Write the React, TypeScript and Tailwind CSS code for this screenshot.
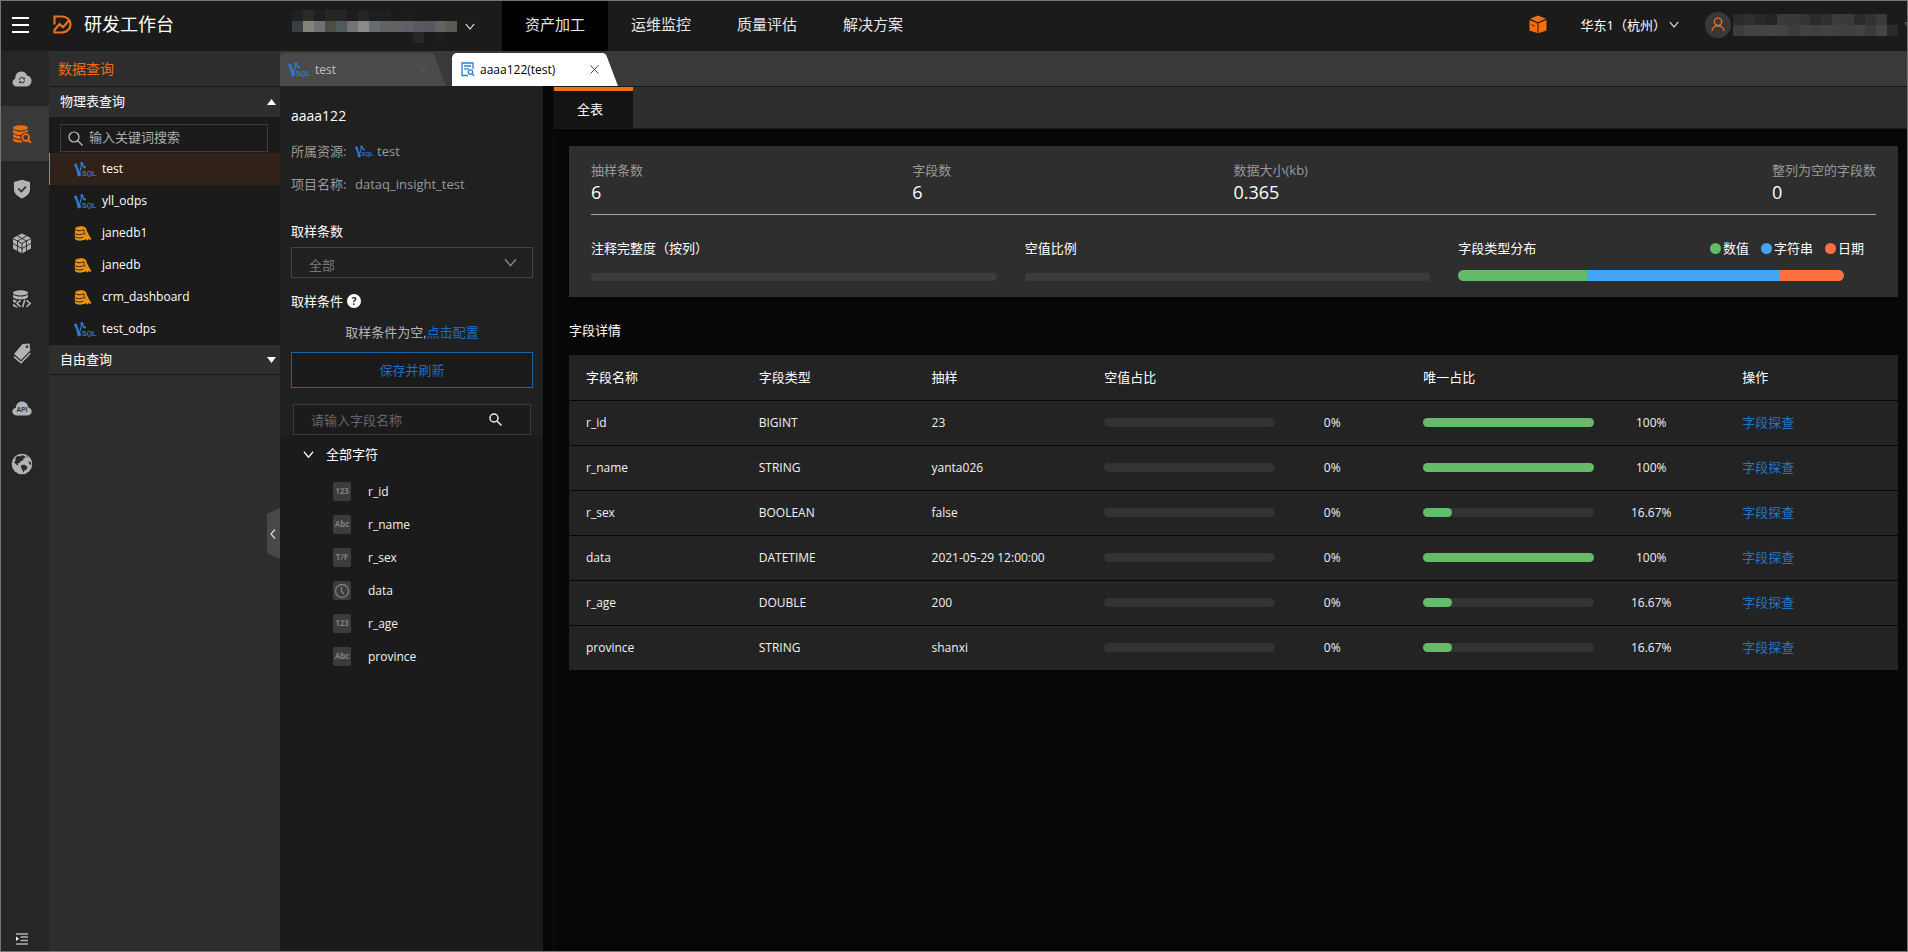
import type { ReactNode } from "react";

const mosaicProject = [
  ["#202121", "#2b2a29", "#1e1e1e", "#262626", "#252525", "#1d1d1d", "#242424", "#1e1e1e", "#1f1f1f", "#1c1c1c", "#1d1d1d", "#1b1b1b", "#1b1b1b", "#1b1b1b", "#1b1b1b"],
  ["#393f45", "#86827c", "#6f7173", "#4c4d45", "#50595b", "#757177", "#8b8a86", "#646d70", "#646068", "#5f6462", "#605e66", "#58585e", "#55595f", "#65625e", "#595a52"],
  ["#1b1b1b", "#1b1b1b", "#1b1b1b", "#1b1b1b", "#1b1b1b", "#1b1b1b", "#1b1b1b", "#1b1b1b", "#1b1b1b", "#1b1b1b", "#1b1b1b", "#272727", "#1b1b1b", "#1e1e1e", "#1b1b1b"],
];

const mosaicUser = [
  ["#2b2b2b", "#303030", "#292929", "#242424", "#393939", "#383838", "#353434", "#292a2c", "#303030", "#3a3b3d", "#3a3a3a", "#2b2b2b", "#323232", "#3a3a3a", "#1b1b1b"],
  ["#3a3c3e", "#434340", "#434343", "#434446", "#414344", "#3f3a3d", "#42423f", "#3e4044", "#424242", "#3e4146", "#423e40", "#3f4344", "#3b3839", "#454545", "#2a2a2a"],
];

function Mosaic({ rows }: { rows: string[][] }) {
  return (
    <div aria-hidden="true">
      {rows.map((row, y) => (
        <div key={y} className="flex">
          {row.map((color, x) => (
            <span key={x} className="h-[11px] w-[11px]" style={{ backgroundColor: color }} />
          ))}
        </div>
      ))}
    </div>
  );
}

function Chevron({ className }: { className: string }) {
  return (
    <svg viewBox="0 0 12 8" fill="none" stroke="currentColor" strokeWidth="1.3" className={className} aria-hidden="true">
      <path d="M1 1l5 6 5-6" />
    </svg>
  );
}

function Close({ className }: { className: string }) {
  return (
    <svg viewBox="0 0 10 10" fill="none" stroke="currentColor" strokeWidth="1.1" className={className} aria-hidden="true">
      <path d="M.5.5l9 9M9.500.5l-9 9" />
    </svg>
  );
}

function SqlIcon({ className = "h-[15px] w-[23px]" }: { className?: string }) {
  return (
    <svg viewBox="0 0 23 15" className={className} aria-hidden="true">
      <g stroke="#3179cc" fill="none" strokeLinecap="round">
        <path d="M1.800 3l3.200 9.500" strokeWidth="2.400" />
        <path d="M5 12.500L8 2M8 2l2.500 3" strokeWidth="1.300" />
      </g>
      <circle cx="1.800" cy="3" r="1.600" fill="#3179cc" />
      <circle cx="7.800" cy="1.600" r="1.500" fill="#3179cc" />
      <circle cx="5.200" cy="12.500" r="1.900" fill="#3179cc" />
      <circle cx="10.500" cy="5.200" r="1.300" fill="#3179cc" />
      <text x="8" y="13.500" fontSize="7" fontWeight="700" fill="#3179cc" fontFamily="Liberation Sans, sans-serif">
        SQL
      </text>
    </svg>
  );
}

function DbIcon() {
  return (
    <svg viewBox="0 0 18 15" className="h-[15px] w-[18px]" aria-hidden="true">
      <path d="M1 2.500C2.500.300 8.500-.4 11 1.300c1.300.9 1.500 2.700 2.200 4.400l4 7.300-.6 1.200-2-1.200-.8 1.500-2.200-1.300C8 15.300 2.500 15 1 13V9.500l-.4-1.700L1 6z" fill="#ee930f" />
      <path d="M1 3.600c2 1.500 6 1.500 8.500.2M1 7.500c2.200 1.500 6 1.400 8.500.1M1.500 11c2 1.300 5.500 1.200 7.800 0M10 3.500c-.2 2 .3 4 1.200 5.300" fill="none" stroke="#1b1b1b" strokeWidth=".9" />
    </svg>
  );
}

const railIcons: { label: string; active?: boolean; icon: ReactNode }[] = [
  {
    label: "数据同步",
    icon: (
      <svg viewBox="0 0 20 16" className="h-4 w-5">
        <path d="M5 15.500C2.200 15.500.500 13.700.500 11.500c0-1.800 1.200-3.300 2.800-3.700C3 3.300 5.700.5 9.300.5c2.700 0 4.900 1.500 5.700 4 2.700.2 4.500 2.500 4.500 5.300 0 3.200-2.200 5.700-5 5.700z" fill="#b3b3b3" />
        <path d="M7.300 8.800A2.800 2.800 0 0 1 12.200 7.500M12.700 9.500a2.800 2.800 0 0 1-4.900 1.300" fill="none" stroke="#282828" strokeWidth="1" />
        <path d="M12.900 6.300v2.100h-2.100zM7.100 12.300v-2.100h2.100z" fill="#282828" />
      </svg>
    ),
  },
  {
    label: "数据查询",
    active: true,
    icon: (
      <svg viewBox="0 0 20 18" className="h-[18px] w-5">
        <g fill="#f26c0d">
          <ellipse cx="8.500" cy="2.800" rx="7.500" ry="2.600" />
          <path d="M1 4.300c1 1.600 4 2.400 7.500 2.400S15 5.900 16 4.300v2.400c-.7.400-2 .6-2.900.8-1.900.3-3.500 1.300-4.200 2.600C5 10.200 1.800 9.100 1 7.400zM1 8.800c1.300 1.700 4 2.400 7.400 2.500v2.600C4.800 13.900 1.700 13 1 11.600zM1 13c1.500 1.500 4.500 2.200 8 2.100.4 1 1 1.700 1.700 2.300C6 18 1.600 17 1 15.300z" />
          <path d="M18 16l2 1.800h-2.600l-1.300-1.300z" />
        </g>
        <circle cx="13.700" cy="12.500" r="3.300" fill="none" stroke="#f26c0d" strokeWidth="1.800" />
        <path d="M16 15l2.700 2.500" stroke="#f26c0d" strokeWidth="2" />
      </svg>
    ),
  },
  {
    label: "数据安全",
    icon: (
      <svg viewBox="0 0 18 20" className="h-5 w-[18px]">
        <path d="M9 .8L17 3v7.500c0 4-3.500 7-8 9-4.500-2-8-5-8-9V3z" fill="#b3b3b3" />
        <path d="M5.300 9.500l3 3 4.800-5" fill="none" stroke="#262626" strokeWidth="1.600" />
      </svg>
    ),
  },
  {
    label: "数据模型",
    icon: (
      <svg viewBox="0 0 20 21" className="h-[21px] w-5">
        <path d="M10 .5l9 4.500v10.500l-9 5-9-5V5z" fill="#b3b3b3" />
        <path d="M1 5.500l9 5 9-5M10 10.500v10M5.500 3l9 5v10.500M14.500 3l-9 5v10.500M1 10.500l9 5 9-5" fill="none" stroke="#262626" strokeWidth=".9" />
      </svg>
    ),
  },
  {
    label: "数据开发",
    icon: (
      <svg viewBox="0 0 20 18" className="h-[18px] w-5">
        <g fill="#b3b3b3">
          <ellipse cx="8.500" cy="2.900" rx="7.500" ry="2.700" />
          <path d="M1 4.600c1.500 1.600 4.500 2 7.500 2s6-.4 7.500-2v2.600c-1.500 1.500-4.500 2.200-7.500 2.200S2.500 8.700 1 7.200zM1 9c1 .9 2.400 1.400 4 1.700L3.300 13 1 11.500zM1 13.500l4.500 3.200v1C3.500 17.400 1.800 16.800 1 15.800z" />
        </g>
        <path d="M8.500 10.300L5 13.500l3.500 3.200M14.500 10.300l3.700 3.200-3.700 3.200M12.800 9.800l-2.300 7.500" fill="none" stroke="#b3b3b3" strokeWidth="1.600" />
      </svg>
    ),
  },
  {
    label: "标签管理",
    icon: (
      <svg viewBox="0 0 18 21" className="h-[21px] w-[18px]">
        <path d="M9.500 1l7-.5.8 7L8 17 1 11z" fill="#b3b3b3" />
        <path d="M1 13.700l7 6 9.300-9.500" fill="none" stroke="#b3b3b3" strokeWidth="1.600" />
        <circle cx="14" cy="3.800" r="1.200" fill="#262626" />
      </svg>
    ),
  },
  {
    label: "接口服务",
    icon: (
      <svg viewBox="0 0 20 15" className="h-[15px] w-5">
        <path d="M4.500 14.500C2 14.500.3 12.800.3 10.600c0-2 1.500-3.600 3.500-3.900C4 3 6.600.4 10 .4s6 2.500 6.200 6.200c2 .3 3.500 1.900 3.500 4 0 2.200-1.700 3.900-4.200 3.900z" fill="#b3b3b3" />
        <text x="10" y="11" textAnchor="middle" fontSize="6.500" fontWeight="700" fill="#333" fontFamily="Liberation Sans, sans-serif">
          API
        </text>
      </svg>
    ),
  },
  {
    label: "全域数据",
    icon: (
      <svg viewBox="0 0 22 22" className="h-[22px] w-[22px]">
        <circle cx="11" cy="11" r="10.300" fill="#b3b3b3" />
        <path d="M4.500 4.500L7 2.800l2.500.7 1-1.300 3 .6 1 1.700-2 1-.5 2-2 .5-1.500 2-2 .5 1 2-2-.8L3 9.300l1.500-1.600zM15 2.500l2 1.300-1 .7zM10.500 12l3-.3 3 2-.5 2.300-2.500 1.500-1 2.300-1.200-3-1.500-2.500zM17.500 8l2.500 1.500.3 2.500-2-.7z" fill="#2b2b2b" />
      </svg>
    ),
  },
];

const sources = [
  { name: "test", kind: "sql" },
  { name: "yll_odps", kind: "sql" },
  { name: "janedb1", kind: "db" },
  { name: "janedb", kind: "db" },
  { name: "crm_dashboard", kind: "db" },
  { name: "test_odps", kind: "sql" },
];

const rows = [
  { name: "r_id", tag: "123", type: "BIGINT", sample: "23", empty: 0, unique: 100 },
  { name: "r_name", tag: "Abc", type: "STRING", sample: "yanta026", empty: 0, unique: 100 },
  { name: "r_sex", tag: "T/F", type: "BOOLEAN", sample: "false", empty: 0, unique: 16.67 },
  { name: "data", tag: "time", type: "DATETIME", sample: "2021-05-29 12:00:00", empty: 0, unique: 100 },
  { name: "r_age", tag: "123", type: "DOUBLE", sample: "200", empty: 0, unique: 16.67 },
  { name: "province", tag: "Abc", type: "STRING", sample: "shanxi", empty: 0, unique: 16.67 },
];

const stats = [
  { label: "抽样条数", value: "6" },
  { label: "字段数", value: "6" },
  { label: "数据大小(kb)", value: "0.365" },
  { label: "整列为空的字段数", value: "0" },
];

function FieldTag({ tag }: { tag: string }) {
  return (
    <span className="flex h-[19px] w-[18px] items-center justify-center rounded-xs bg-[#3c3c3c] text-[8px] font-bold text-[#808080]">
      {tag === "time" ? (
        <svg viewBox="0 0 16 16" fill="none" stroke="currentColor" strokeWidth="1.300" className="h-4 w-4" aria-hidden="true">
          <circle cx="8" cy="8" r="6.500" />
          <path d="M7.500 4v4.500L10 11" />
        </svg>
      ) : (
        tag
      )}
    </span>
  );
}

function Ratio({ value }: { value: number }) {
  return (
    <div className="flex items-center">
      <div className="h-[9px] w-3/5 rounded-full bg-[#333333]">
        <div className="h-full rounded-full bg-[#66bb6a]" style={{ width: `${value}%` }} />
      </div>
      <span className="w-2/5 text-center">{value}%</span>
    </div>
  );
}

function TopBar() {
  return (
    <header className="flex h-[50px] items-center bg-[#1b1b1b] text-white">
      <button type="button" aria-label="菜单" className="ml-[11px] flex w-[17px] flex-col gap-[5px] pb-[3px]">
        <span className="h-0.5 bg-white" />
        <span className="h-0.5 bg-white" />
        <span className="h-0.5 bg-white" />
      </button>
      <svg viewBox="0 0 19 22" className="ml-6 h-[22px] w-[19px]" fill="none" stroke="#f0701a" aria-hidden="true">
        <path d="M1.500 9.500V1.500h7.500c5 0 8.500 3.300 8.500 7.800s-3.500 8.200-8.500 8.200H1.500V15L6.500 9l3.500 3.200L15.500 6" strokeWidth="2.200" />
      </svg>
      <h1 className="ml-3 w-[208px] pb-1 text-lg leading-6">研发工作台</h1>
      <Mosaic rows={mosaicProject} />
      <Chevron className="ml-2 h-[7px] w-[10px]" />
      <nav className="ml-[27px] flex h-full text-[15px] text-[#e6e6e6]">
        {["资产加工", "运维监控", "质量评估", "解决方案"].map((item, i) => (
          <a key={item} href="#" className={`flex items-center px-[23px] pb-[3px] ${i === 0 ? "bg-black" : ""}`}>
            {item}
          </a>
        ))}
      </nav>
      <div className="ml-auto flex items-center pb-[3px]">
        <svg viewBox="0 0 18 19" className="h-[19px] w-[18px]" aria-hidden="true">
          <path d="M9 .5l8 3.300-8 3.400-8-3.400zM.5 5L8.500 8.300v10L.5 15.500zM17.500 5l-8 3.300v10l8-2.800z" fill="#f66d0a" />
          <path d="M2.500 9.700l3.500 1.300" stroke="#4a1d00" strokeWidth="1" />
        </svg>
        <button type="button" className="ml-[34px] flex items-center gap-[3px] text-[13px] leading-5">
          华东1（杭州）
          <Chevron className="h-[7px] w-[10px]" />
        </button>
        <span className="ml-[26px] flex h-[26px] w-[26px] items-center justify-center rounded-full bg-[#393939]">
          <svg viewBox="0 0 14 15" className="h-[15px] w-3.5" fill="none" stroke="#e8701e" strokeWidth="1.400" aria-hidden="true">
            <circle cx="7" cy="4.800" r="3.700" />
            <path d="M1 14c.2-3 2.700-5.300 6-5.300s5.800 2.300 6 5.300" />
          </svg>
        </span>
        <span className="mr-[6px] ml-0.5">
          <Mosaic rows={mosaicUser} />
        </span>
        <svg viewBox="0 0 3 5" className="h-[5px] w-[3px]" aria-hidden="true">
          <path d="M0 0h3v5z" fill="#4a4a4a" />
        </svg>
      </div>
    </header>
  );
}

function Rail() {
  return (
    <nav className="flex w-12 shrink-0 flex-col bg-[#262626]">
      {railIcons.map((item) => (
        <button
          key={item.label}
          type="button"
          aria-label={item.label}
          className={`flex h-[55px] items-center justify-center pr-1.5 ${item.active ? "bg-[#393939]" : ""}`}
        >
          {item.icon}
        </button>
      ))}
      <button type="button" aria-label="展开" className="mt-auto mb-[6px] flex justify-center pr-1.5">
        <svg viewBox="0 0 12 12" className="h-3 w-3" aria-hidden="true">
          <path d="M0 1h12M4.500 4h7.500M4.500 7.500h7.500M0 11h12" stroke="#b0b0b0" strokeWidth="1.500" />
          <path d="M0 3.500l3 2.300-3 2.300z" fill="#fff" />
        </svg>
      </button>
    </nav>
  );
}

function Sidebar() {
  return (
    <aside className="relative w-[231px] shrink-0 bg-[#2e2e2e] text-[13px] text-white">
      <h2 className="flex h-9 items-center border-b border-[#161616] pl-[9px] text-sm text-[#f26c0d]">数据查询</h2>
      <button type="button" className="flex h-[30px] w-full items-center justify-between pr-1 pl-[11px]">
        物理表查询
        <svg viewBox="0 0 9 6" className="h-1.5 w-[9px]" aria-hidden="true">
          <path d="M0 6l4.500-6L9 6z" fill="#fff" />
        </svg>
      </button>
      <div className="bg-[#1b1b1b] pt-[7px]">
        <label className="mr-3 ml-[11px] flex h-7 items-center gap-[6px] border border-[#3d3d3d] pl-[7px]">
          <svg viewBox="0 0 15 15" fill="none" stroke="#c4c4c4" strokeWidth="1.200" className="h-[15px] w-[15px] shrink-0" aria-hidden="true">
            <circle cx="6" cy="6" r="5" />
            <path d="M9.700 9.700l4.800 4.800" />
          </svg>
          <input aria-label="搜索物理表" placeholder="输入关键词搜索" className="w-full min-w-0 bg-transparent outline-none placeholder:text-[#adadad]" />
        </label>
        <ul className="pt-px text-xs">
          {sources.map((s, i) => (
            <li key={s.name} className={i === 0 ? "border-l border-[#e0752f] bg-[#302119]" : "border-l border-transparent"}>
              <a href="#" className="flex h-8 items-center pl-6">
                <span className="w-7">{s.kind === "sql" ? <SqlIcon /> : <DbIcon />}</span>
                {s.name}
              </a>
            </li>
          ))}
        </ul>
      </div>
      <button type="button" className="flex h-[30px] w-full items-center justify-between border-b border-[#161616] pr-1 pl-[11px]">
        自由查询
        <svg viewBox="0 0 9 6" className="h-1.5 w-[9px]" aria-hidden="true">
          <path d="M0 0l4.500 6L9 0z" fill="#fff" />
        </svg>
      </button>
      <button
        type="button"
        aria-label="收起"
        className="absolute top-[457px] right-0 flex h-[51px] w-[13px] items-center justify-center bg-[#484848] pr-0.5 [clip-path:polygon(0_6px,100%_0,100%_100%,0_45px)]"
      >
        <svg viewBox="0 0 6 10" className="h-2.5 w-1.5" fill="none" stroke="#ddd" strokeWidth="1.200" aria-hidden="true">
          <path d="M5 .5L1 5l4 4.500" />
        </svg>
      </button>
    </aside>
  );
}

function Tab({ active, icon, title }: { active?: boolean; icon: ReactNode; title: string }) {
  return (
    <div className={`flex h-[33px] w-[166px] ${active ? "text-black" : "text-[#c2c2c2]"}`}>
      <div className={`flex grow items-center rounded-tl-[5px] ${active ? "bg-white pl-[9px]" : "bg-[#4a4a4a] pl-2"}`}>
        {icon}
        <a href="#" className={active ? "ml-[5px]" : "ml-1"}>
          {title}
        </a>
        <button type="button" aria-label="关闭" className={`ml-auto mr-[3px] ${active ? "text-[#444]" : "text-[#5c5c5c]"}`}>
          <Close className="h-[9px] w-[9px]" />
        </button>
      </div>
      <svg viewBox="0 0 16 33" className={`h-[33px] w-4 ${active ? "fill-white" : "fill-[#4a4a4a]"}`} aria-hidden="true">
        <path d="M0 0c3 0 4 1.500 5 4l11 29H0z" />
      </svg>
    </div>
  );
}

function FieldPanel() {
  return (
    <section className="flex w-[263px] shrink-0 flex-col bg-[#1b1b1b] text-[13px] leading-5 text-white">
      <div className="bg-[#202020] pt-[18px] pr-[10px] pl-[11px]">
        <h2 className="text-sm leading-6">aaaa122</h2>
        <dl className="text-[#999]">
          <div className="mt-[13px] flex h-5 items-center">
            <dt className="w-16">所属资源:</dt>
            <dd className="flex items-center gap-[3px]">
              <SqlIcon className="h-[13px] w-[19px]" />
              test
            </dd>
          </div>
          <div className="mt-[13px] flex h-5 items-center">
            <dt className="w-16">项目名称:</dt>
            <dd>dataq_insight_test</dd>
          </div>
        </dl>
        <hr className="mt-3 border-[#1c1c1c]" />
        <label htmlFor="sample-count" className="mt-[14px] block">
          取样条数
        </label>
        <div className="relative mt-[6px]">
          <select id="sample-count" className="h-[31px] w-full appearance-none border border-[#444] bg-[#202020] pt-1 pl-[17px] text-[#7d7674]">
            <option>全部</option>
          </select>
          <Chevron className="pointer-events-none absolute top-[11px] right-4 h-[9px] w-[13px] text-[#8a8a8a]" />
        </div>
        <div className="mt-[13px] flex items-center gap-1">
          取样条件
          <span className="flex h-3.5 w-3.5 items-center justify-center rounded-full bg-white text-[10px] leading-none font-bold text-[#202020]">?</span>
        </div>
        <p className="mt-[11px] text-center text-[#b5b5b5]">
          取样条件为空,
          <a href="#" className="text-[#1a6fc4]">
            点击配置
          </a>
        </p>
        <button type="button" className="mt-[10px] h-9 w-full border border-[#1a66a8] bg-[#1a1a1a] text-[#1a6fc4]">
          保存并刷新
        </button>
        <label className="mx-0.5 mt-4 flex h-[31px] items-center border border-[#3d3d3d] bg-[#1b1b1b] pr-7 pl-[17px]">
          <input aria-label="搜索字段" placeholder="请输入字段名称" className="w-full min-w-0 bg-transparent outline-none placeholder:text-[#666]" />
          <svg viewBox="0 0 13 13" fill="none" stroke="#ececec" strokeWidth="1.500" className="h-[13px] w-[13px] shrink-0" aria-hidden="true">
            <circle cx="5" cy="5" r="4" />
            <path d="M8 8l4.500 4.500" />
          </svg>
        </label>
      </div>
      <button type="button" className="mt-[9px] flex items-center gap-3 pl-[23px]">
        <Chevron className="h-[9px] w-[11px]" />
        全部字符
      </button>
      <ul className="mt-[11px] pl-[53px] text-xs text-[#f2f2f2]">
        {rows.map((r) => (
          <li key={r.name} className="flex h-[33px] items-center gap-[17px]">
            <FieldTag tag={r.tag} />
            {r.name}
          </li>
        ))}
      </ul>
    </section>
  );
}

function Summary() {
  return (
    <section className="bg-[#2e2e2e] px-[22px] pt-[14px] pb-4">
      <dl className="grid grid-cols-4 border-b border-[#a8a8a8] pb-[10px]">
        {stats.map((s) => (
          <div key={s.label} className="last:justify-self-end">
            <dt className="text-[13px] leading-5 text-[#999]">{s.label}</dt>
            <dd className="text-lg leading-6">{s.value}</dd>
          </div>
        ))}
      </dl>
      <div className="mt-[23px] mr-3 grid grid-cols-3 gap-7">
        {["注释完整度（按列）", "空值比例"].map((title) => (
          <div key={title} className="flex flex-col justify-between">
            <h3 className="leading-5">{title}</h3>
            <div className="h-2 rounded-sm bg-[#3d3d3d]" />
          </div>
        ))}
        <div>
          <div className="flex items-center leading-5">
            <h3 className="mr-auto">字段类型分布</h3>
            <ul className="flex gap-3">
              <li className="flex items-center gap-0.5">
                <span className="h-[11px] w-[11px] rounded-full bg-[#66bb6a]" />
                数值
              </li>
              <li className="flex items-center gap-0.5">
                <span className="h-[11px] w-[11px] rounded-full bg-[#42a5f5]" />
                字符串
              </li>
              <li className="flex items-center gap-0.5">
                <span className="h-[11px] w-[11px] rounded-full bg-[#ff7043]" />
                日期
              </li>
            </ul>
          </div>
          <div className="mt-3 flex h-[11px] w-[95%] overflow-hidden rounded-md">
            <span className="w-2/6 bg-[#66bb6a]" />
            <span className="w-3/6 bg-[#42a5f5]" />
            <span className="w-1/6 bg-[#ff7043]" />
          </div>
        </div>
      </div>
    </section>
  );
}

function FieldTable() {
  return (
    <table className="mt-[15px] w-full table-fixed text-left text-xs">
      <colgroup>
        <col className="w-[13%]" />
        <col className="w-[13%]" />
        <col className="w-[13%]" />
        <col className="w-[24%]" />
        <col className="w-[24%]" />
        <col className="w-[13%]" />
      </colgroup>
      <thead className="text-[13px]">
        <tr className="h-[45px] border-b border-[#070707] bg-[#232323]">
          {["字段名称", "字段类型", "抽样", "空值占比", "唯一占比", "操作"].map((h) => (
            <th key={h} scope="col" className="px-[17px] font-normal">
              {h}
            </th>
          ))}
        </tr>
      </thead>
      <tbody className="text-[#f2f2f2]">
        {rows.map((r) => (
          <tr key={r.name} className="h-[45px] border-b border-[#070707] bg-[#232323]">
            <td className="px-[17px]">{r.name}</td>
            <td className="px-[17px]">{r.type}</td>
            <td className="px-[17px] whitespace-nowrap">{r.sample}</td>
            <td className="px-[17px]">
              <Ratio value={r.empty} />
            </td>
            <td className="px-[17px]">
              <Ratio value={r.unique} />
            </td>
            <td className="px-[17px] text-[13px]">
              <a href="#" className="text-[#2277c4]">
                字段探查
              </a>
            </td>
          </tr>
        ))}
      </tbody>
    </table>
  );
}

export default function App() {
  return (
    <div className="flex min-h-screen flex-col border border-[#757575] bg-[#070707] font-['Open_Sans','Noto_Sans_CJK_SC',sans-serif]">
      <TopBar />
      <div className="flex grow">
        <Rail />
        <Sidebar />
        <div className="flex min-w-0 grow flex-col">
          <div className="flex h-[35px] items-end gap-[6px] bg-[#393939] text-xs">
            <Tab icon={<SqlIcon />} title="test" />
            <Tab
              active
              title="aaaa122(test)"
              icon={
                <svg viewBox="0 0 14 15" className="h-[15px] w-3.5" fill="none" stroke="#2f7fd0" strokeWidth="1.300" aria-hidden="true">
                  <path d="M7 13.500H1V1h11v6M3 4h7M3 6.800h5" />
                  <circle cx="9.500" cy="10" r="2.200" />
                  <path d="M11 11.700l2.200 2.300" />
                </svg>
              }
            />
          </div>
          <div className="flex grow">
            <FieldPanel />
            <main className="ml-[10px] min-w-0 grow border-l border-[#111] text-[13px] text-white">
              <div className="flex h-[43px] border-y border-[#1a1a1a] bg-[#2e2e2e]">
                <button type="button" className="w-[79px] border-t-4 border-[#ee7318] bg-[#141414] pl-[23px] text-left">
                  全表
                </button>
              </div>
              <div className="pt-[17px] pr-[9px] pl-[15px]">
                <Summary />
                <h2 className="mt-[23px] leading-5">字段详情</h2>
                <FieldTable />
              </div>
            </main>
          </div>
        </div>
      </div>
    </div>
  );
}
